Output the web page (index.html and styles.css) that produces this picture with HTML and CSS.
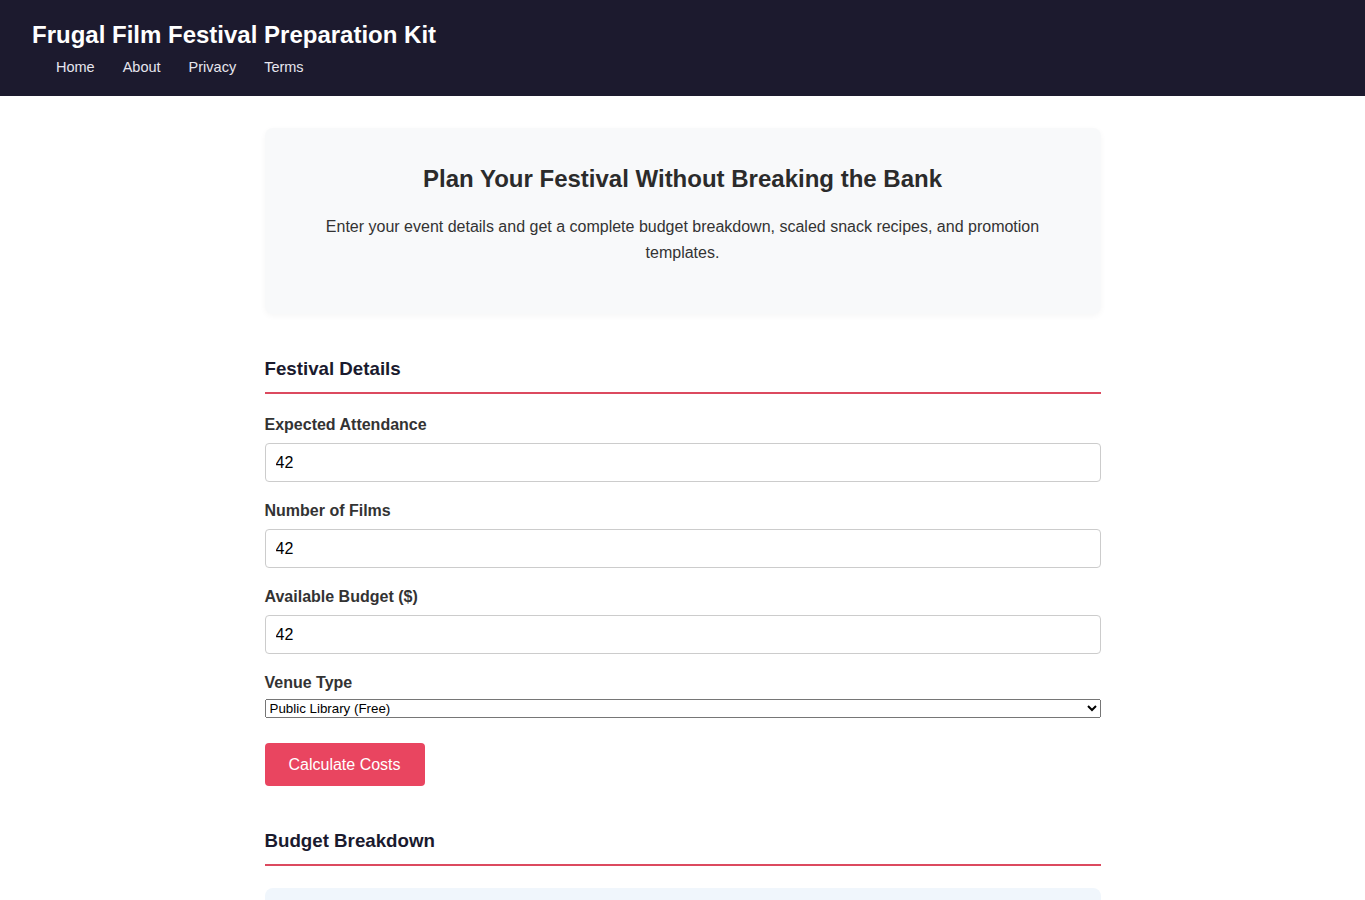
FILE: index.html
```html
<!doctype html>
<html lang="en">
<head>
  <meta charset="utf-8">
  <title>Frugal Film Festival Preparation Kit</title>
  <meta name="viewport" content="width=device-width, initial-scale=1">
  <link rel="stylesheet" href="styles.css">
</head>
<body>
<header class="site-header">
  <h1 class="site-title">Frugal Film Festival Preparation Kit</h1>
  <nav class="site-nav">
    <a href="#">Home</a>
    <a href="#">About</a>
    <a href="#">Privacy</a>
    <a href="#">Terms</a>
  </nav>
</header>

<main class="container">
  <section class="hero">
    <h2>Plan Your Festival Without Breaking the Bank</h2>
    <p>Enter your event details and get a complete budget breakdown, scaled snack recipes, and promotion templates.</p>
  </section>

  <section class="section">
    <h3 class="section-title">Festival Details</h3>
    <div class="field">
      <label for="attendance">Expected Attendance</label>
      <input type="number" id="attendance" value="42">
    </div>
    <div class="field">
      <label for="films">Number of Films</label>
      <input type="number" id="films" value="42">
    </div>
    <div class="field">
      <label for="budget">Available Budget ($)</label>
      <input type="number" id="budget" value="42">
    </div>
    <div class="field field-select">
      <label for="venue">Venue Type</label>
      <select id="venue">
        <option>Public Library (Free)</option>
        <option>Community Center</option>
        <option>Backyard</option>
      </select>
    </div>
    <button class="btn" type="button">Calculate Costs</button>
  </section>

  <section class="section">
    <h3 class="section-title">Budget Breakdown</h3>
    <div class="result-box"></div>
  </section>
</main>
</body>
</html>
```

FILE: styles.css
```css
*{
  box-sizing: border-box;
}
body{
  margin: 0;
  font-family: "Liberation Sans", Arial, sans-serif;
  color: #333;
  background: #fff;
}
.site-header{
  background: #1c1a2e;
  color: #fff;
  padding: 20px 32px 20px;
  height: 96px;
}
.site-title{
  margin: 0;
  font-size: 24px;
  line-height: 30px;
  font-weight: bold;
}
.site-nav{
  display: flex;
  gap: 28px;
  margin-top: 8px;
  padding-left: 24px;
}
.site-nav a{
  color: #e6e6ee;
  text-decoration: none;
  font-size: 14.5px;
  line-height: 18px;
}
.container{
  width: 836px;
  margin: 32px auto 0;
}
.hero{
  background: #f8f9fa;
  border-radius: 8px;
  box-shadow: 0 2px 6px rgba(0,0,0,0.04);
  padding: 37px 32px 32px;
  text-align: center;
}
.hero h2{
  margin: 0 0 21px;
  font-size: 24px;
  line-height: 28px;
  color: #2b2b2b;
}
.hero p{
  margin: 0 0 16px;
  font-size: 16px;
  line-height: 26px;
  color: #333;
}
.section{
  margin-top: 44px;
}
.section-title{
  margin: 0 0 22px;
  font-size: 18.72px;
  line-height: 22px;
  color: #1a1a2e;
  padding-bottom: 12px;
  border-bottom: 2px solid #dc4a5f;
}
.field{
  margin-bottom: 20px;
}
.field label{
  display: block;
  font-weight: bold;
  font-size: 16px;
  line-height: 18px;
  margin-bottom: 9px;
  color: #333;
}
.field-select label{
  margin-bottom: 7px;
}
.field input{
  display: block;
  width: 100%;
  height: 39px;
  padding: 8px 10px;
  font-family: "Liberation Sans", Arial, sans-serif;
  font-size: 16px;
  color: #000;
  border: 1px solid #ccc;
  border-radius: 4px;
}
.field input::-webkit-inner-spin-button{
  -webkit-appearance: none;
}
.field select{
  display: block;
  width: 100%;
  font-family: "Liberation Sans", Arial, sans-serif;
  font-size: 13.33px;
}
.btn{
  margin-top: 5px;
  background: #e94560;
  color: #fff;
  border: none;
  border-radius: 4px;
  padding: 12px 24px;
  font-family: "Liberation Sans", Arial, sans-serif;
  font-size: 16px;
  line-height: 19px;
  cursor: pointer;
}
.result-box{
  background: #f0f6fc;
  border-radius: 8px;
  height: 120px;
}
```
